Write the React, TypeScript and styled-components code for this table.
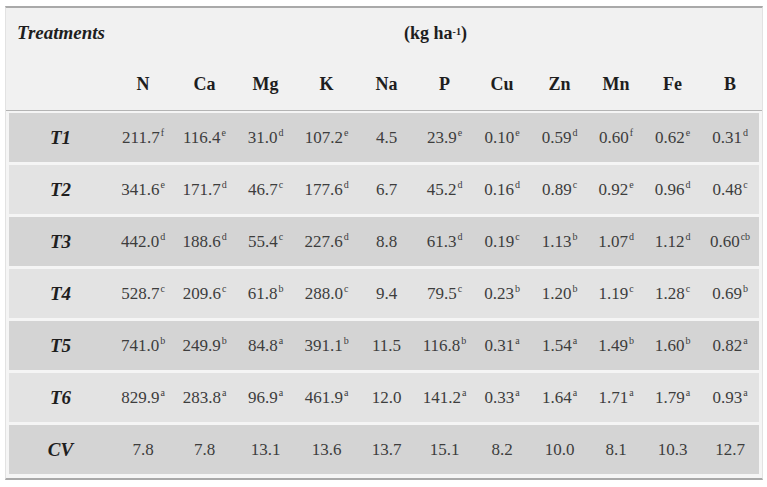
import React from "react";
import styled, { createGlobalStyle } from "styled-components";

const Global = createGlobalStyle`
  html, body { margin: 0; padding: 0; background: #ffffff; }
  body { font-family: "Liberation Serif", "Times New Roman", serif; }
`;

const COLS = "103px 62px 61px 61px 61px 59px 57px 58px 57px 56px 57px 58px";

const Frame = styled.div`
  margin: 6px 0 0 5px;
  width: 756px;
  background: #f1f1f1;
  border-top: 2px solid #a9a9a9;
  border-bottom: 2px solid #a9a9a9;
  border-left: 1px solid #e2e2e2;
  border-right: 1px solid #e2e2e2;
`;

const Header = styled.div`
  height: 102px;
  padding: 0 3px;
  border-bottom: 1px solid #b4b4b4;
  box-shadow: 0 1px 0 #fbfbfb;
  display: grid;
  grid-template-columns: ${COLS};
  grid-template-rows: 50px 52px;
`;

const HeadCell = styled.div<{ $span?: boolean; $left?: boolean }>`
  display: flex;
  align-items: center;
  justify-content: ${(p) => (p.$left ? "flex-start" : "center")};
  padding-left: ${(p) => (p.$left ? "8px" : "0")};
  grid-column: ${(p) => (p.$span ? "2 / span 11" : "auto")};
  font-family: "Liberation Serif", serif;
  font-weight: 700;
  font-size: 18px;
  color: #1e1e1e;
  white-space: nowrap;
`;

const Italic = styled.span`
  font-style: italic;
  font-size: 19px;
`;

const Body = styled.div`
  padding: 2px 3px 4px 3px;
  display: flex;
  flex-direction: column;
  gap: 3px;
  background: #f5f5f5;
`;

const Row = styled.div<{ $dark: boolean }>`
  height: 49px;
  display: grid;
  grid-template-columns: ${COLS};
  align-items: center;
  background: ${(p) => (p.$dark ? "#d4d4d4" : "#e3e3e3")};
`;

const Label = styled.div`
  text-align: center;
  font-family: "Liberation Serif", serif;
  font-weight: 700;
  font-style: italic;
  font-size: 19px;
  color: #1e1e1e;
`;

const Value = styled.div`
  text-align: center;
  font-size: 17px;
  color: #3d3d3d;
  white-space: nowrap;
`;

const Sup = styled.sup`
  font-size: 10px;
  vertical-align: top;
  position: relative;
  top: -1px;
  margin-left: 1px;
`;

const SmallSup = styled.sup`
  font-size: 10px;
  vertical-align: top;
  position: relative;
  top: -2px;
`;

const heads = ["N", "Ca", "Mg", "K", "Na", "P", "Cu", "Zn", "Mn", "Fe", "B"];

type Cell = [string, string];

const rows: { label: string; cells: Cell[] }[] = [
  {
    label: "T1",
    cells: [
      ["211.7", "f"], ["116.4", "e"], ["31.0", "d"], ["107.2", "e"], ["4.5", ""],
      ["23.9", "e"], ["0.10", "e"], ["0.59", "d"], ["0.60", "f"], ["0.62", "e"], ["0.31", "d"],
    ],
  },
  {
    label: "T2",
    cells: [
      ["341.6", "e"], ["171.7", "d"], ["46.7", "c"], ["177.6", "d"], ["6.7", ""],
      ["45.2", "d"], ["0.16", "d"], ["0.89", "c"], ["0.92", "e"], ["0.96", "d"], ["0.48", "c"],
    ],
  },
  {
    label: "T3",
    cells: [
      ["442.0", "d"], ["188.6", "d"], ["55.4", "c"], ["227.6", "d"], ["8.8", ""],
      ["61.3", "d"], ["0.19", "c"], ["1.13", "b"], ["1.07", "d"], ["1.12", "d"], ["0.60", "cb"],
    ],
  },
  {
    label: "T4",
    cells: [
      ["528.7", "c"], ["209.6", "c"], ["61.8", "b"], ["288.0", "c"], ["9.4", ""],
      ["79.5", "c"], ["0.23", "b"], ["1.20", "b"], ["1.19", "c"], ["1.28", "c"], ["0.69", "b"],
    ],
  },
  {
    label: "T5",
    cells: [
      ["741.0", "b"], ["249.9", "b"], ["84.8", "a"], ["391.1", "b"], ["11.5", ""],
      ["116.8", "b"], ["0.31", "a"], ["1.54", "a"], ["1.49", "b"], ["1.60", "b"], ["0.82", "a"],
    ],
  },
  {
    label: "T6",
    cells: [
      ["829.9", "a"], ["283.8", "a"], ["96.9", "a"], ["461.9", "a"], ["12.0", ""],
      ["141.2", "a"], ["0.33", "a"], ["1.64", "a"], ["1.71", "a"], ["1.79", "a"], ["0.93", "a"],
    ],
  },
  {
    label: "CV",
    cells: [
      ["7.8", ""], ["7.8", ""], ["13.1", ""], ["13.6", ""], ["13.7", ""],
      ["15.1", ""], ["8.2", ""], ["10.0", ""], ["8.1", ""], ["10.3", ""], ["12.7", ""],
    ],
  },
];

export default function App() {
  return (
    <>
      <Global />
      <Frame>
        <Header>
          <HeadCell $left>
            <Italic>Treatments</Italic>
          </HeadCell>
          <HeadCell $span>
            (kg ha<SmallSup>-1</SmallSup>)
          </HeadCell>
          <HeadCell />
          {heads.map((h) => (
            <HeadCell key={h}>{h}</HeadCell>
          ))}
        </Header>
        <Body>
          {rows.map((r, i) => (
            <Row key={r.label} $dark={i % 2 === 0}>
              <Label>{r.label}</Label>
              {r.cells.map(([v, s], j) => (
                <Value key={j}>
                  {v}
                  {s && <Sup>{s}</Sup>}
                </Value>
              ))}
            </Row>
          ))}
        </Body>
      </Frame>
    </>
  );
}
